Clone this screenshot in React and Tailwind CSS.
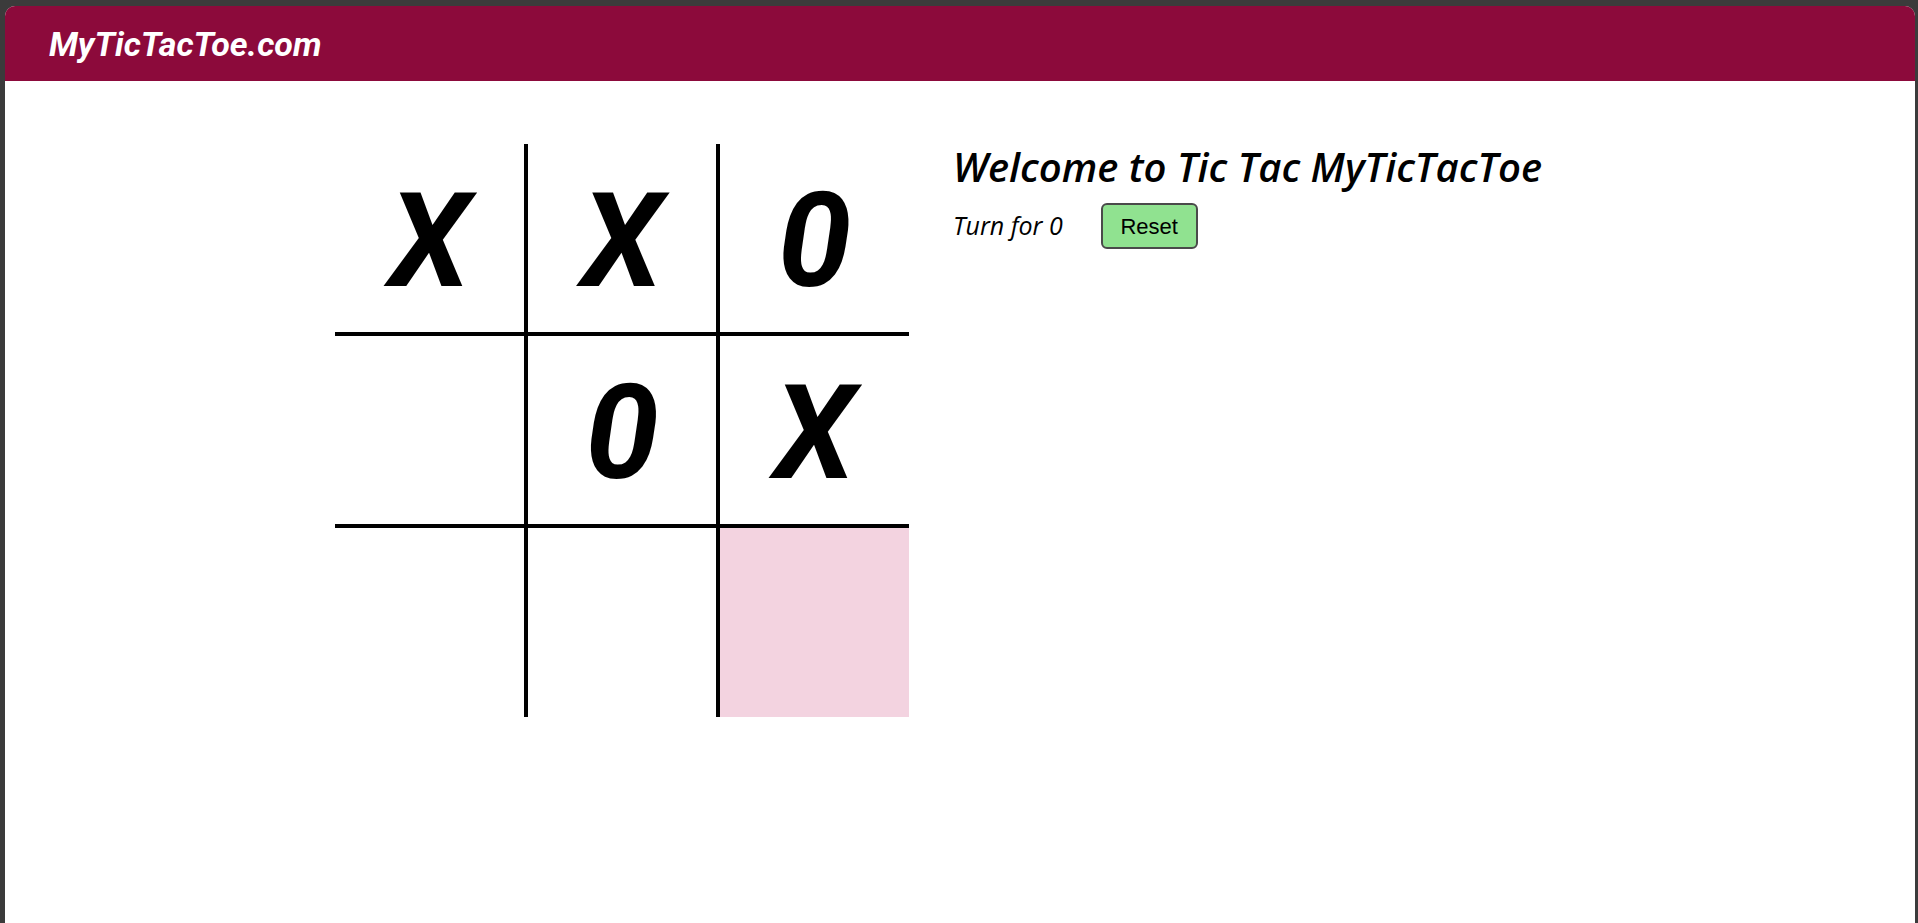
import React, { useState } from 'react';

const initialBoard = ['X', 'X', '0', '', '0', 'X', '', '', ''];

const cellBorders = [
  'border-r-4 border-b-4',
  'border-r-4 border-b-4',
  'border-b-4',
  'border-r-4 border-b-4',
  'border-r-4 border-b-4',
  'border-b-4',
  'border-r-4',
  'border-r-4',
  '',
];

const App = () => {
  const [board, setBoard] = useState(initialBoard);
  const [turn, setTurn] = useState('0');
  const [hovered, setHovered] = useState(8);

  const handleClick = (i) => {
    if (board[i]) return;
    const next = [...board];
    next[i] = turn;
    setBoard(next);
    setTurn(turn === 'X' ? '0' : 'X');
  };

  const reset = () => {
    setBoard(Array(9).fill(''));
    setTurn('X');
  };

  return (
    <div className="min-h-screen bg-[#3b3b3b] pt-[6px] pl-[5px] pr-[3px]">
      <div className="bg-white rounded-t-[10px] min-h-[917px] overflow-hidden">
        <header className="h-[75px] bg-[#8c0a3b] flex items-center pl-[44px]">
          <h1 className="text-white text-[34px] font-bold italic font-['Roboto',sans-serif] leading-none">
            MyTicTacToe.com
          </h1>
        </header>

        <main className="flex items-start pt-[63px] pl-[330px] gap-[44px]">
          <div className="grid grid-cols-[193px_192px_189px] grid-rows-[192px_192px_189px] shrink-0">
            {board.map((mark, i) => (
              <div
                key={i}
                onClick={() => handleClick(i)}
                onMouseEnter={() => setHovered(i)}
                className={`flex items-center justify-center pt-[6px] border-black cursor-pointer ${cellBorders[i]} ${
                  hovered === i ? 'bg-[#f3d3e0]' : 'bg-white'
                }`}
              >
                <span className="text-[132px] font-bold italic font-['Roboto',sans-serif] leading-none text-black select-none">
                  {mark}
                </span>
              </div>
            ))}
          </div>

          <div className="flex flex-col pt-[3px]">
            <h2 className="text-[40px] leading-none font-semibold italic font-['Open_Sans',sans-serif] text-black">
              Welcome to Tic Tac MyTicTacToe
            </h2>
            <div className="flex items-center gap-[38px] mt-[16px]">
              <span className="text-[25px] italic font-['Open_Sans',sans-serif] text-black">
                Turn for {turn}
              </span>
              <button
                onClick={reset}
                className="w-[97px] h-[46px] border-2 border-[#4a4a4a] rounded-[6px] bg-[#90e290] text-[22px] text-black font-['Liberation_Sans',Arial,sans-serif]"
              >
                Reset
              </button>
            </div>
          </div>
        </main>
      </div>
    </div>
  );
};

export default App;
